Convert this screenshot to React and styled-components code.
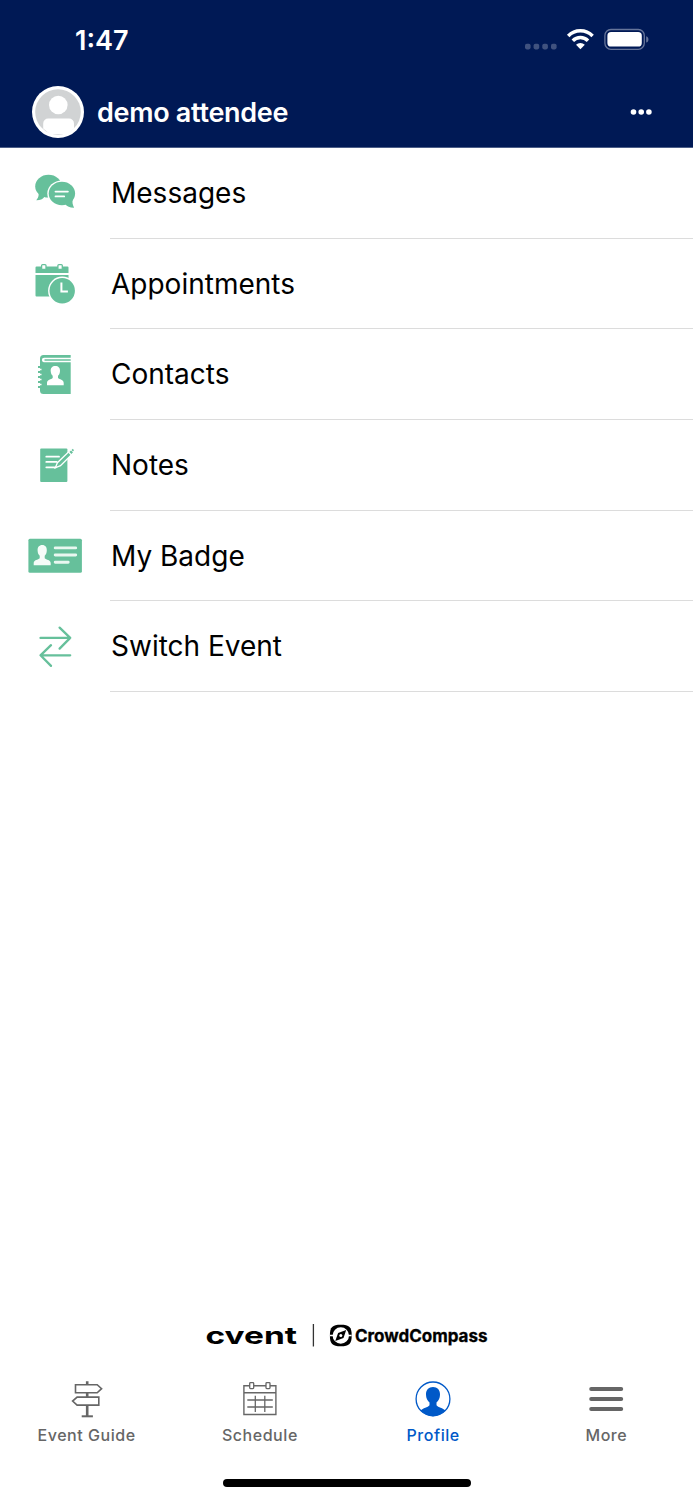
import styled, { createGlobalStyle } from "styled-components";

const GREEN = "#66c09b";
const NAVY = "#001955";
const BLUE = "#0059c8";
const GREY = "#666666";

const GlobalStyle = createGlobalStyle`
  * {
    box-sizing: border-box;
  }
  body {
    margin: 0;
    background: #ffffff;
    font-family: Inter, "Liberation Sans", sans-serif;
  }
  svg {
    display: block;
    flex: none;
  }
`;

const Screen = styled.div`
  display: flex;
  flex-direction: column;
  width: 693px;
  height: 1500px;
  overflow: hidden;
`;

const Header = styled.header`
  flex: none;
  height: 148px;
  background: ${NAVY};
  border-bottom: 1px solid #4c5e88;
  color: #ffffff;
`;

const StatusBar = styled.div`
  display: flex;
  align-items: center;
  justify-content: space-between;
  height: 80px;
  padding: 0 43px 0 75px;
`;

const Time = styled.span`
  font-size: 27px;
  font-weight: 600;
  letter-spacing: ${({ spacing }) => spacing}px;
`;

const UserBar = styled.div`
  display: flex;
  align-items: center;
  height: 64px;
  padding: 0 40px 0 32px;
`;

const UserName = styled.h1`
  flex: 1;
  margin: 2px 0 0 13px;
  font-size: 27px;
  font-weight: 600;
  line-height: 32px;
  letter-spacing: ${({ spacing }) => spacing}px;
`;

const Menu = styled.ul`
  flex: 1;
  margin: 0;
  padding: 0;
  list-style: none;
`;

const MenuItem = styled.li`
  display: flex;
  height: 90.7px;
`;

const MenuIcon = styled.div`
  display: flex;
  align-items: center;
  justify-content: center;
  width: 110px;
`;

const MenuLabel = styled.div`
  flex: 1;
  display: flex;
  align-items: center;
  padding-left: 1px;
  border-bottom: 1px solid #dcdcdc;
  color: #000000;
  font-size: 28px;
  letter-spacing: ${({ spacing }) => spacing}px;
`;

const Branding = styled.div`
  display: flex;
  justify-content: center;
  height: 40px;
  margin-bottom: 23px;
`;

const TabBar = styled.nav`
  display: flex;
  height: 100px;
`;

const Tab = styled.div`
  flex: 1;
  display: flex;
  flex-direction: column;
  align-items: center;
  gap: 6px;
  color: ${({ $active }) => ($active ? BLUE : GREY)};
  font-size: 16px;
  font-weight: 500;
  line-height: 20px;
  letter-spacing: 0.55px;
`;

const HomeIndicator = styled.div`
  flex: none;
  width: 248px;
  height: 8px;
  margin: 0 auto 13px;
  border-radius: 4px;
  background: #000000;
`;

const StatusIcons = () => (
  <svg width="126" height="26" viewBox="524 27 126 26">
    <g fill="#ffffff" fillOpacity="0.25">
      {[525, 533.6, 542.3, 551].map((x) => (
        <rect key={x} x={x} y="43.8" width="5.6" height="5.6" rx="1.8" />
      ))}
    </g>
    <g fill="none" stroke="#ffffff" strokeWidth="3.5">
      <path d="M568.2 35.9a17.2 17.2 0 0 1 24.4 0" />
      <path d="M572.8 40.7a10.8 10.8 0 0 1 15.2 0" />
    </g>
    <path d="M576 44.7a6.4 6.4 0 0 1 8.8 0l-4.4 4.6z" fill="#ffffff" />
    <rect x="604.9" y="29.5" width="39.4" height="19.8" rx="6" fill="none" stroke="#66759a" strokeWidth="1.3" />
    <rect x="607.4" y="32" width="34.4" height="14.6" rx="3.7" fill="#ffffff" />
    <path d="M646.2 36.2c3 .8 3 5.600 0 6.400z" fill="#66759a" />
  </svg>
);

const Avatar = () => (
  <svg width="52" height="52" viewBox="0 0 52 52">
    <circle cx="26" cy="26" r="26" fill="#ffffff" />
    <circle cx="26" cy="26" r="22.8" fill="#d1d3d4" />
    <circle cx="26.300" cy="19" r="9.300" fill="#ffffff" />
    <path d="M11.200 42.500V37.500a5 5 0 0 1 5-5H37a5 5 0 0 1 5 5v5L35 48H18z" fill="#ffffff" />
  </svg>
);

const Dots = () => (
  <svg width="23" height="8" viewBox="0 0 23 8" fill="#ffffff">
    <circle cx="3.500" cy="4" r="2.800" />
    <circle cx="11.200" cy="4" r="2.800" />
    <circle cx="18.900" cy="4" r="2.800" />
  </svg>
);

const IconBox = ({ children }) => (
  <svg width="60" height="60" viewBox="0 0 60 60" fill={GREEN}>
    {children}
  </svg>
);

const MessagesIcon = () => (
  <IconBox>
    <ellipse cx="23.500" cy="23.200" rx="13.300" ry="11.400" />
    <path d="M12.200 28c2.500 3 1.500 6-.9 9.300 3.800.1 6.200-1 8-3.300l4-3z" />
    <ellipse cx="36.900" cy="30.500" rx="14.600" ry="13" fill="#ffffff" />
    <ellipse cx="36.900" cy="30.500" rx="13.200" ry="11.700" />
    <path d="M48.200 35.500c-1.500 3.500-.5 6 .9 9.200-4 .1-7-1.100-8.800-3.400l-2-2z" />
    <path d="M30.500 28.600h12.400M30.500 33.400h8.700" stroke="#ffffff" strokeWidth="1.800" strokeLinecap="round" />
  </IconBox>
);

const AppointmentsIcon = () => (
  <IconBox>
    <path d="M11.500 12.600h31q1 0 1 1v5.400h-33v-5.400q0-1 1-1zM10.500 21.100h33v21.500h-32q-1 0-1-1z" />
    <g fill="#ffffff" stroke={GREEN} strokeWidth="1.300">
      <rect x="16.600" y="10.600" width="4.400" height="4.800" rx="1" />
      <rect x="32.900" y="10.600" width="4.400" height="4.800" rx="1" />
    </g>
    <circle cx="37.200" cy="36.700" r="14.100" fill="#ffffff" />
    <circle cx="37.200" cy="36.700" r="12.700" />
    <path d="M36.400 28.500v8.900h6.500" fill="none" stroke="#ffffff" strokeWidth="2" />
  </IconBox>
);

const ContactsIcon = () => (
  <IconBox>
    <path d="M45.700 10H18.500q-3.500 0-3.500 3.500V45.500q0 3.500 3.500 3.500H45.700V17.200H18.800q-1.900 0-1.900-2.100 0-2.400 2.200-2.400H45.700z" />
    <path d="M19.500 15H45.700" stroke={GREEN} strokeWidth="1.500" />
    <path d="M13 22h3M13 27h3M13 32h3M13 37h3M13 42h3" stroke={GREEN} strokeWidth="2" />
    <path d="M15 24.500h1.500M15 29.500h1.500M15 34.500h1.500M15 39.500h1.500" stroke="#ffffff" strokeWidth="1.500" />
    <path
      d="M30.300 20.900c-3 0-4.800 2-4.600 5.100.1 2.400.9 3.800 2 4.800v2.300c-1.400 1.500-5.700 1.500-5.700 5v2.200h16.700v-2.200c0-3.500-4.300-3.500-5.700-5v-2.300c1.100-1 1.900-2.400 2-4.800.2-3.100-1.600-5.100-4.700-5.100z"
      fill="#ffffff"
    />
  </IconBox>
);

const NotesIcon = () => (
  <IconBox>
    <rect x="15.200" y="13.600" width="27.200" height="33.400" rx="1" />
    <path d="M21.300 21.700H34M21.300 26.900H31.700M21.300 32.300H31" stroke="#ffffff" strokeWidth="1.800" strokeLinecap="round" />
    <path d="M30.200 32.900l2.200-5.200L46 14.600l2.800 2.800-13.300 13.300z" fill={GREEN} stroke="#ffffff" strokeWidth="1.300" />
    <path d="M43.500 17l3 3" stroke="#ffffff" strokeWidth="1.200" />
    <path d="M46.600 14.900l1.200-1.100 1.200 1.400-1.100 1.200z" />
  </IconBox>
);

const BadgeIcon = () => (
  <IconBox>
    <rect x="3.400" y="12.700" width="53.500" height="34" rx="1.500" />
    <path
      d="M17.300 18.900c-3.200 0-4.900 2.200-4.700 5.600.1 2.600.9 4.200 2.100 5.300v2.500c-1.500 1.700-6 1.500-6 5v1.900h17v-1.900c0-3.500-4.500-3.300-6-5v-2.500c1.200-1.100 2-2.700 2.100-5.300.2-3.400-1.500-5.600-4.500-5.600z"
      fill="#f5fcf8"
    />
    <path d="M30.200 21.900h20.500M30.200 29h20.500M30.200 36.300h13" stroke="#e9f7f0" strokeWidth="2.900" strokeLinecap="round" />
  </IconBox>
);

const SwitchIcon = () => (
  <IconBox>
    <g fill="none" stroke={GREEN} strokeWidth="2.300" strokeLinecap="round" strokeLinejoin="round">
      <path d="M15.500 20.900H45.200M34.600 10.600L45.200 20.900 34.600 31.600" />
      <path d="M45.200 38.300H15.500M26 28.200L15.500 38.300 26 48.900" />
    </g>
  </IconBox>
);

const BrandLogos = () => (
  <svg width="300" height="40" viewBox="197 1305 300 40">
    <text
      x="205.500"
      y="1332.500"
      fontFamily="Inter"
      fontWeight="700"
      fontSize="24"
      textLength="91.500"
      lengthAdjust="spacingAndGlyphs"
    >
      cvent
    </text>
    <path d="M313.400 1313v22.500" stroke="#333333" strokeWidth="1.300" />
    <path d="M340.800 1313.800c8.500 0 10.900 2.300 10.900 10.700s-2.400 10.800-10.900 10.800-10.900-2.400-10.900-10.800 2.400-10.700 10.900-10.700z" />
    <circle cx="340.800" cy="1324.500" r="7.300" fill="none" stroke="#ffffff" strokeWidth="1.800" />
    <circle cx="340.800" cy="1324.500" r="7" fill="#ffffff" />
    <path d="M330 1324.500h5M346.600 1324.500h5" stroke="#ffffff" strokeWidth="1.300" />
    <path d="M346.200 1319l-2.700 7.900-8.200 3.200 2.800-8.100z" />
    <circle cx="340.800" cy="1324.500" r="1.500" fill="#ffffff" />
    <text
      x="355"
      y="1330.500"
      fontFamily="Inter"
      fontWeight="700"
      fontSize="17"
      stroke="#000000"
      strokeWidth="0.300"
      textLength="132.500"
      lengthAdjust="spacingAndGlyphs"
    >
      CrowdCompass
    </text>
  </svg>
);

const TabIcon = ({ children }) => (
  <svg width="40" height="40" viewBox="0 0 40 40" fill="none" stroke="currentColor">
    {children}
  </svg>
);

const GuideIcon = () => (
  <TabIcon>
    <path d="M8.500 5.700h21.700l4.400 4-4.400 4.100H8.500zM31.800 18.100H10.100l-4.500 4 4.500 4h21.700z" strokeWidth="1.600" />
    <path d="M20.200 2.300v3M20.200 14v4M20.200 26.300v11" strokeWidth="2.600" />
    <path d="M14.700 37.300h11.200" strokeWidth="2" />
  </TabIcon>
);

const ScheduleIcon = () => (
  <TabIcon>
    <path d="M3.900 6.700h32v28.800h-32zM3.900 13.700h32" strokeWidth="1.400" />
    <path d="M7.300 21h25.500M7.300 28h25.500M15.300 16.700V33M24.800 16.700V33" strokeWidth="1.300" />
    <g fill="#ffffff" strokeWidth="1.300">
      <rect x="9.700" y="3.700" width="4" height="5.900" rx="0.800" />
      <rect x="26" y="3.700" width="4" height="5.900" rx="0.800" />
    </g>
  </TabIcon>
);

const ProfileIcon = () => (
  <TabIcon>
    <circle cx="20" cy="19.900" r="16.900" strokeWidth="1.300" />
    <path
      d="M20 8.100c-4.300 0-7.200 2.900-7 7.600.1 3.500 1.400 6 3.500 7.800v2.700c-1.700 2.300-6.500 2.500-9 5.400 3 3.400 7.300 5.600 12.500 5.600s9.500-2.200 12.500-5.600c-2.500-2.900-7.300-3.100-9-5.400v-2.700c2.100-1.800 3.400-4.300 3.500-7.800.2-4.700-2.700-7.600-7-7.600z"
      fill="currentColor"
      stroke="none"
    />
  </TabIcon>
);

const MoreIcon = () => (
  <TabIcon>
    <path d="M5.200 9.900h30M5.200 20h30M5.200 30.100h30" strokeWidth="4" strokeLinecap="round" />
  </TabIcon>
);

const menu = [
  { label: "Messages", Icon: MessagesIcon },
  { label: "Appointments", Icon: AppointmentsIcon },
  { label: "Contacts", Icon: ContactsIcon },
  { label: "Notes", Icon: NotesIcon },
  { label: "My Badge", Icon: BadgeIcon },
  { label: "Switch Event", Icon: SwitchIcon },
];

const tabs = [
  { label: "Event Guide", Icon: GuideIcon },
  { label: "Schedule", Icon: ScheduleIcon },
  { label: "Profile", Icon: ProfileIcon, active: true },
  { label: "More", Icon: MoreIcon },
];

function App() {
  return (
    <Screen>
      <GlobalStyle />
      <Header>
        <StatusBar>
          <Time spacing={0}>1:47</Time>
          <StatusIcons />
        </StatusBar>
        <UserBar>
          <Avatar />
          <UserName spacing={-0.3}>demo attendee</UserName>
          <Dots />
        </UserBar>
      </Header>
      <Menu>
        {menu.map(({ label, Icon }) => (
          <MenuItem key={label}>
            <MenuIcon>
              <Icon />
            </MenuIcon>
            <MenuLabel spacing={0}>{label}</MenuLabel>
          </MenuItem>
        ))}
      </Menu>
      <Branding>
        <BrandLogos />
      </Branding>
      <TabBar>
        {tabs.map(({ label, Icon, active }) => (
          <Tab key={label} $active={active}>
            <Icon />
            {label}
          </Tab>
        ))}
      </TabBar>
      <HomeIndicator />
    </Screen>
  );
}

export default App;
